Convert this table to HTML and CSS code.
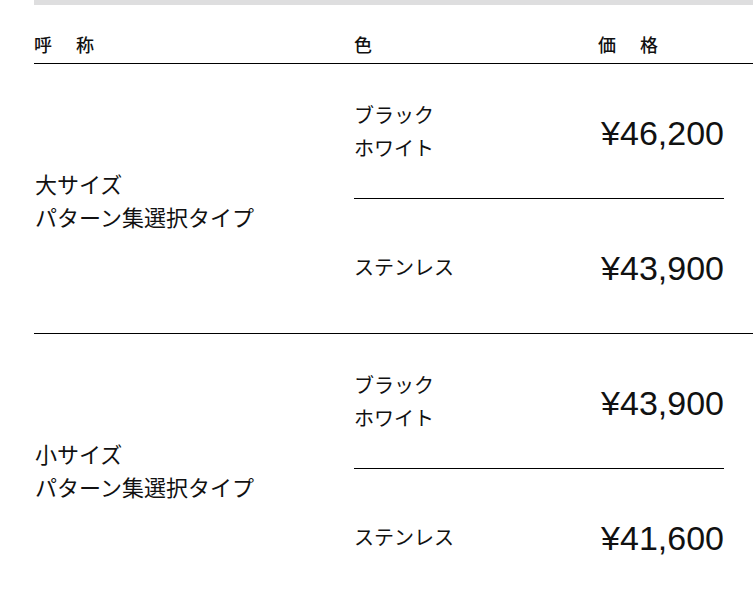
FILE: index.html
```html
<!DOCTYPE html>
<html lang="ja">
<head>
<meta charset="utf-8">
<title>価格表</title>
<link rel="stylesheet" href="styles.css">
</head>
<body>
<div class="page">
  <div class="topbar"></div>
  <div class="table">
    <div class="head">
      <div class="h-name">呼　称</div>
      <div class="h-color">色</div>
      <div class="h-price">価　格</div>
    </div>
    <div class="group">
      <div class="name">大サイズ<br>パターン集選択タイプ</div>
      <div class="variants">
        <div class="variant">
          <div class="color">ブラック<br>ホワイト</div>
          <div class="price">¥46,200</div>
        </div>
        <div class="variant">
          <div class="color">ステンレス</div>
          <div class="price">¥43,900</div>
        </div>
      </div>
    </div>
    <div class="group">
      <div class="name">小サイズ<br>パターン集選択タイプ</div>
      <div class="variants">
        <div class="variant">
          <div class="color">ブラック<br>ホワイト</div>
          <div class="price">¥43,900</div>
        </div>
        <div class="variant">
          <div class="color">ステンレス</div>
          <div class="price">¥41,600</div>
        </div>
      </div>
    </div>
  </div>
</div>
</body>
</html>
```

FILE: styles.css
```css
html, body {
  margin: 0;
  padding: 0;
  background: #fff;
}
body {
  font-family: "Noto Sans CJK JP", "Noto Sans", sans-serif;
  color: #111;
  overflow: hidden;
}
.page {
  margin-left: 34px;
  width: 760px;
}
.topbar {
  height: 5px;
  background: #dededf;
}
.table {
  margin-top: 27px;
}
.head {
  display: grid;
  grid-template-columns: 320px 244px 1fr;
  font-size: 18px;
  font-weight: 500;
  line-height: 24px;
  letter-spacing: 3px;
  padding: 0 0 7px 0;
  border-bottom: 1px solid #000;
}
.group {
  display: grid;
  grid-template-columns: 320px 370px 1fr;
  border-bottom: 1px solid #000;
}
.name {
  display: flex;
  align-items: center;
  padding: 2px 0 0 1px;
  font-size: 22px;
  line-height: 33px;
}
.variants {
  display: flex;
  flex-direction: column;
}
.variant {
  display: grid;
  grid-template-columns: 244px 1fr;
  align-items: center;
  height: 134px;
}
.variant + .variant {
  border-top: 1px solid #000;
}
.color {
  font-size: 20px;
  line-height: 33px;
}
.price {
  font-family: "Liberation Sans", Arial, sans-serif;
  font-size: 34px;
  text-align: right;
  line-height: 40px;
  padding-top: 4px;
}
```
